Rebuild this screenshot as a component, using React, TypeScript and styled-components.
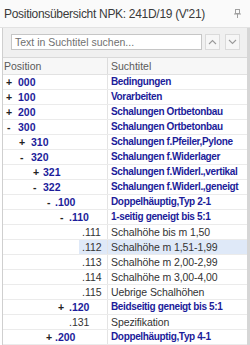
import styled, { createGlobalStyle } from 'styled-components';

const GlobalStyle = createGlobalStyle`
  html, body {
    margin: 0;
    padding: 0;
    background: #ffffff;
  }
  body {
    font-family: "Liberation Sans", Arial, sans-serif;
  }
`;

type Row = {
  sign: '+' | '-' | '';
  num: string;
  title: string;
  bold: boolean;
  signX: number;
  numX: number;
  selected?: boolean;
};

const rows: Row[] = [
  { sign: '+', num: '000', title: 'Bedingungen', bold: true, signX: 6, numX: 18 },
  { sign: '+', num: '100', title: 'Vorarbeiten', bold: true, signX: 6, numX: 18 },
  { sign: '+', num: '200', title: 'Schalungen Ortbetonbau', bold: true, signX: 6, numX: 18 },
  { sign: '-', num: '300', title: 'Schalungen Ortbetonbau', bold: true, signX: 7, numX: 18 },
  { sign: '+', num: '310', title: 'Schalungen f.Pfeiler,Pylone', bold: true, signX: 19, numX: 31 },
  { sign: '-', num: '320', title: 'Schalungen f.Widerlager', bold: true, signX: 20, numX: 31 },
  { sign: '+', num: '321', title: 'Schalungen f.Widerl.,vertikal', bold: true, signX: 33, numX: 43 },
  { sign: '-', num: '322', title: 'Schalungen f.Widerl.,geneigt', bold: true, signX: 33, numX: 43 },
  { sign: '-', num: '.100', title: 'Doppelhäuptig,Typ 2-1', bold: true, signX: 47, numX: 55 },
  { sign: '-', num: '.110', title: '1-seitig geneigt bis 5:1', bold: true, signX: 60, numX: 69 },
  { sign: '', num: '.111', title: 'Schalhöhe bis m 1,50', bold: false, signX: 0, numX: 82 },
  { sign: '', num: '.112', title: 'Schalhöhe m 1,51-1,99', bold: false, signX: 0, numX: 82, selected: true },
  { sign: '', num: '.113', title: 'Schalhöhe m 2,00-2,99', bold: false, signX: 0, numX: 82 },
  { sign: '', num: '.114', title: 'Schalhöhe m 3,00-4,00', bold: false, signX: 0, numX: 82 },
  { sign: '', num: '.115', title: 'Uebrige Schalhöhen', bold: false, signX: 0, numX: 82 },
  { sign: '+', num: '.120', title: 'Beidseitig geneigt bis 5:1', bold: true, signX: 58, numX: 69 },
  { sign: '', num: '.131', title: 'Spezifikation', bold: false, signX: 0, numX: 69 },
  { sign: '+', num: '.200', title: 'Doppelhäuptig,Typ 4-1', bold: true, signX: 46, numX: 55 },
];

const Window = styled.div`
  width: 250px;
  height: 345px;
  overflow: hidden;
  display: flex;
  flex-direction: column;
  background: #ffffff;
`;

const TitleBar = styled.div`
  height: 27px;
  flex: none;
  display: flex;
  align-items: center;
  justify-content: space-between;
  padding: 0 9px 0 4px;
  background: #fafafa;
  border-bottom: 1px solid #e2e2e2;
`;

const Title = styled.span`
  font-size: 12px;
  color: #3a3a3a;
  letter-spacing: -0.3px;
`;

const Panel = styled.div`
  flex: 1;
  margin-left: 2px;
  border-left: 1px solid #cfcfcf;
  border-right: 3px solid #d6d6d6;
  display: flex;
  flex-direction: column;
  min-height: 0;
`;

const Toolbar = styled.div`
  height: 29px;
  flex: none;
  display: flex;
  align-items: flex-start;
  padding: 6px 0 0 8px;
  box-sizing: border-box;
  background: #f0f0f0;
  gap: 3px;
`;

const SearchInput = styled.div`
  width: 191px;
  height: 16px;
  box-sizing: border-box;
  background: #ffffff;
  border: 1px solid #c6c6c6;
  font-size: 10.5px;
  color: #707070;
  line-height: 14px;
  padding-left: 3px;
  white-space: nowrap;
  overflow: hidden;
`;

const NavButton = styled.div<{ $gap?: number }>`
  width: 15px;
  height: 16px;
  box-sizing: border-box;
  border: 1px solid #dadada;
  background: #f6f6f6;
  display: flex;
  align-items: center;
  justify-content: center;
  margin-left: ${p => p.$gap ?? 0}px;
`;

const Table = styled.div`
  display: flex;
  flex-direction: column;
`;

const HeaderRow = styled.div`
  height: 16px;
  display: flex;
  background: #f7f7f7;
  border-top: 1px solid #d9d9d9;
  border-bottom: 1px solid #e2e2e2;
  font-size: 10.5px;
  color: #5a5a5a;
`;

const HeaderCell = styled.div<{ $pos?: boolean }>`
  display: flex;
  align-items: center;
  padding-left: ${p => (p.$pos ? 1 : 3)}px;
  ${p => (p.$pos ? 'width: 103px; border-right: 1px solid #dcdcdc;' : 'flex: 1;')}
`;

const DataRow = styled.div`
  height: 14px;
  display: flex;
  border-bottom: 1px solid #ebebeb;
  font-size: 11px;
  line-height: 14px;
`;

const PosCell = styled.div<{ $bold: boolean }>`
  width: 104px;
  flex: none;
  display: flex;
  border-right: 1px solid #e4e4e4;
  font-weight: ${p => (p.$bold ? 700 : 400)};
  font-size: ${p => (p.$bold ? 10.5 : 10.5)}px;
  color: ${p => (p.$bold ? '#1c1c9a' : '#333333')};
`;

const Sign = styled.span<{ $x: number; $w: number }>`
  margin-left: ${p => p.$x}px;
  width: ${p => p.$w}px;
  flex: none;
  color: #222222;
  font-weight: 700;
`;

const Num = styled.span<{ $x: number; $selected?: boolean }>`
  margin-left: ${p => p.$x}px;
  padding-left: 3px;
  flex: 1;
  background: ${p => (p.$selected ? '#dfe9f8' : 'transparent')};
`;

const TitleCell = styled.div<{ $bold: boolean; $selected?: boolean }>`
  flex: 1;
  padding-left: 3px;
  white-space: nowrap;
  overflow: hidden;
  font-weight: ${p => (p.$bold ? 700 : 400)};
  color: ${p => (p.$bold ? '#1c1c9a' : '#333333')};
  font-size: ${p => (p.$bold ? 10 : 10.5)}px;
  letter-spacing: ${p => (p.$bold ? -0.35 : -0.1)}px;
  background: ${p => (p.$selected ? '#dfe9f8' : 'transparent')};
`;

const Chevron = ({ up }: { up?: boolean }) => (
  <svg width="9" height="6" viewBox="0 0 9 6">
    <path
      d={up ? 'M1 5 L4.5 1.5 L8 5' : 'M1 1 L4.5 4.5 L8 1'}
      fill="none"
      stroke="#9a9a9a"
      strokeWidth="1.1"
    />
  </svg>
);

const Pin = () => (
  <svg width="7" height="9" viewBox="0 0 7 9">
    <rect x="1.5" y="0.5" width="4" height="4" fill="none" stroke="#a0a0a0" />
    <line x1="0" y1="5" x2="7" y2="5" stroke="#a0a0a0" />
    <line x1="3.5" y1="5" x2="3.5" y2="9" stroke="#a0a0a0" />
  </svg>
);

export default function App() {
  return (
    <>
      <GlobalStyle />
      <Window>
        <TitleBar>
          <Title>Positionsübersicht NPK: 241D/19 (V'21)</Title>
          <Pin />
        </TitleBar>
        <Panel>
          <Toolbar>
            <SearchInput>Text in Suchtitel suchen...</SearchInput>
            <NavButton>
              <Chevron up />
            </NavButton>
            <NavButton $gap={2}>
              <Chevron />
            </NavButton>
          </Toolbar>
          <Table>
            <HeaderRow>
              <HeaderCell $pos>Position</HeaderCell>
              <HeaderCell>Suchtitel</HeaderCell>
            </HeaderRow>
            {rows.map(r => {
              const base = 3;
              const hasSign = r.sign !== '';
              return (
                <DataRow key={r.num + r.title}>
                  <PosCell $bold={r.bold}>
                    {hasSign && (
                      <Sign $x={r.signX - base} $w={r.numX - r.signX - 3}>
                        {r.sign}
                      </Sign>
                    )}
                    <Num
                      $x={hasSign ? 0 : r.numX - base - 3}
                      $selected={r.selected}
                    >
                      {r.num}
                    </Num>
                  </PosCell>
                  <TitleCell $bold={r.bold} $selected={r.selected}>
                    {r.title}
                  </TitleCell>
                </DataRow>
              );
            })}
          </Table>
        </Panel>
      </Window>
    </>
  );
}
